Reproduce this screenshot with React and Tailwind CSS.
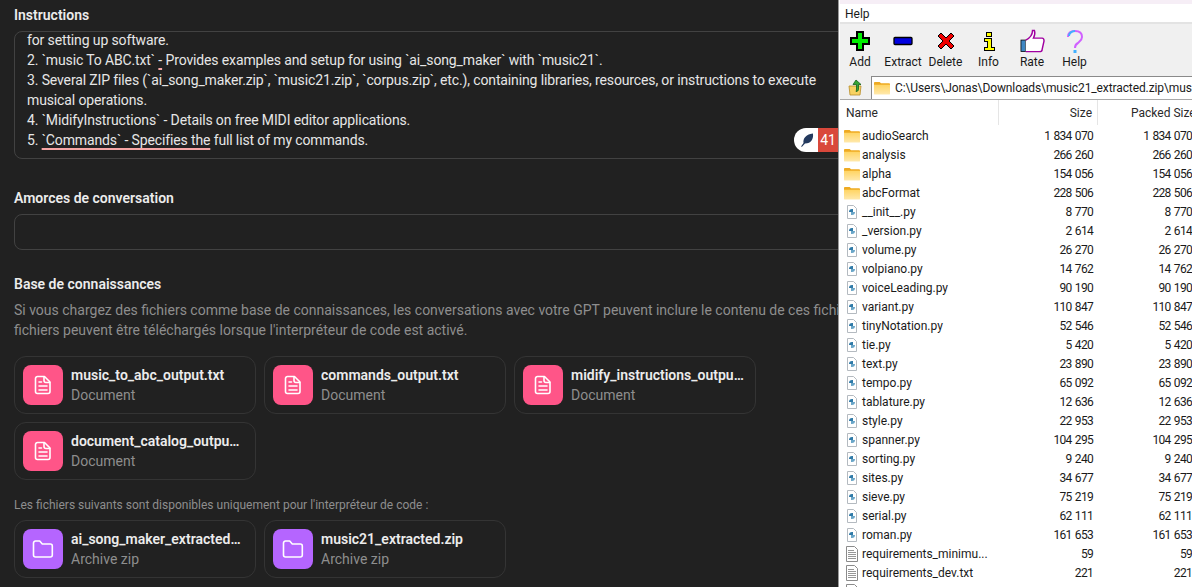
import { Fragment } from 'react';

const SQUIGGLE = 'underline decoration-[#f5a5a5] decoration-2 underline-offset-[3px] [text-decoration-skip-ink:none]';

const INSTRUCTIONS = [
  <Fragment key="1">for setting up software.</Fragment>,
  <Fragment key="2">2. `music To ABC.txt` <span className={SQUIGGLE}>-</span> Provides examples and setup for using `ai_song_maker` with `music21`.</Fragment>,
  <Fragment key="3">3. Several ZIP files (`ai_song_maker.zip`, `music21.zip`, `corpus.zip`, etc.), containing libraries, resources, or instructions to execute</Fragment>,
  <Fragment key="4">musical operations.</Fragment>,
  <Fragment key="5">4. `MidifyInstructions` - Details on free MIDI editor applications.</Fragment>,
  <Fragment key="6">5. <span className={SQUIGGLE}>`Commands` - Specifies the</span> full list of my commands.</Fragment>,
];

const DOCS = [
  'music_to_abc_output.txt',
  'commands_output.txt',
  'midify_instructions_output.txt',
  'document_catalog_output.txt',
];

const ZIPS = ['ai_song_maker_extracted.zip', 'music21_extracted.zip'];

const ROWS = [
  ['audioSearch', '1 834 070', 'dir'],
  ['analysis', '266 260', 'dir'],
  ['alpha', '154 056', 'dir'],
  ['abcFormat', '228 506', 'dir'],
  ['__init__.py', '8 770', 'py'],
  ['_version.py', '2 614', 'py'],
  ['volume.py', '26 270', 'py'],
  ['volpiano.py', '14 762', 'py'],
  ['voiceLeading.py', '90 190', 'py'],
  ['variant.py', '110 847', 'py'],
  ['tinyNotation.py', '52 546', 'py'],
  ['tie.py', '5 420', 'py'],
  ['text.py', '23 890', 'py'],
  ['tempo.py', '65 092', 'py'],
  ['tablature.py', '12 636', 'py'],
  ['style.py', '22 953', 'py'],
  ['spanner.py', '104 295', 'py'],
  ['sorting.py', '9 240', 'py'],
  ['sites.py', '34 677', 'py'],
  ['sieve.py', '75 219', 'py'],
  ['serial.py', '62 111', 'py'],
  ['roman.py', '161 653', 'py'],
  ['requirements_minimu...', '59', 'txt'],
  ['requirements_dev.txt', '221', 'txt'],
  ['', '', 'txt'],
];

function DocIcon() {
  return (
    <svg width="18" height="20" viewBox="0 0 18 20" fill="none" stroke="white" strokeWidth="1.6" strokeLinecap="round" strokeLinejoin="round">
      <path d="M3.5 1.5h7l5.5 5.5v9.5a2 2 0 0 1-2 2H3.5a2 2 0 0 1-2-2v-13a2 2 0 0 1 2-2z" />
      <path d="M10 1.8V5.5a2 2 0 0 0 2 2h3.6" />
      <path d="M5 7h2.5M5 11h8M5 15h8" />
    </svg>
  );
}

function ZipIcon() {
  return (
    <svg width="22" height="20" viewBox="0 0 22 20" fill="none" stroke="white" strokeWidth="1.6" strokeLinejoin="round">
      <path d="M1.500 4a2 2 0 0 1 2-2h4.200l2.600 3h8a2 2 0 0 1 2 2v9a2 2 0 0 1-2 2h-14.800a2 2 0 0 1-2-2z" />
    </svg>
  );
}

function FileCard({ name, sub, color, icon }) {
  return (
    <div className="flex items-center gap-2 w-[242px] h-[58px] rounded-xl border border-[#343434] pl-2 pr-[11px]">
      <div className={`w-10 h-10 shrink-0 rounded-lg flex items-center justify-center ${color}`}>{icon}</div>
      <div className="min-w-0 flex-1">
        <div className="truncate text-[14px] leading-5 font-semibold text-[#ececec]">{name}</div>
        <div className="text-[14px] leading-5 text-[#8e8e8e]">{sub}</div>
      </div>
    </div>
  );
}

function SmallFolder() {
  return (
    <svg width="16" height="14" viewBox="0 0 17 14" className="shrink-0">
      <defs>
        <linearGradient id="folderBody" x1="0" y1="0" x2="0" y2="1">
          <stop offset="0" stopColor="#ffd462" />
          <stop offset="1" stopColor="#ffe9ad" />
        </linearGradient>
      </defs>
      <path d="M0 1.500a1 1 0 0 1 1-1h5l1.500 1.500h8.500a1 1 0 0 1 1 1V4H0z" fill="#eeaa22" />
      <path d="M0 3.500h17v9.500a1 1 0 0 1-1 1H1a1 1 0 0 1-1-1z" fill="url(#folderBody)" />
    </svg>
  );
}

function PyFile() {
  return (
    <svg width="16" height="16" viewBox="0 0 16 16" className="shrink-0">
      <path d="M3.500 1.500h6l3 3v10h-9z" fill="#fff" stroke="#b4bac0" />
      <path d="M5 8a3 3 0 0 1 3-3h1v3H5z" fill="#2f7aa8" />
      <path d="M11 8a3 3 0 0 1-3 3H7V8h4z" fill="#6aa6c8" />
    </svg>
  );
}

function TxtFile() {
  return (
    <svg width="16" height="16" viewBox="0 0 16 16" className="shrink-0" fill="none" stroke="#8b8b8b">
      <path d="M2.500 0.500h8l3 3v12h-11z" fill="#fff" />
      <path d="M4 4.500h6M4 6.500h8M4 8.500h8M4 10.500h8M4 12.500h8" strokeWidth="0.900" />
    </svg>
  );
}

function ToolBtn({ label, className, children }) {
  return (
    <div className={`flex flex-col items-center shrink-0 ${className}`}>
      <div className="h-[26px] flex items-center justify-center">{children}</div>
      <div className="text-[12px] leading-4 text-[#1a1a1a]">{label}</div>
    </div>
  );
}

function Toolbar() {
  return (
    <div className="flex h-[52px] bg-[#f0f0f0] pt-[4px] pl-[1px]">
      <ToolBtn label="Add" className="w-[38px]">
        <svg width="20" height="20" viewBox="0 0 20 20" shapeRendering="crispEdges">
          <path d="M7 1h6v6h6v6h-6v6H7v-6H1V7h6z" fill="#00f000" stroke="#000" strokeWidth="1.500" />
        </svg>
      </ToolBtn>
      <ToolBtn label="Extract" className="w-[48px]">
        <svg width="20" height="10" viewBox="0 0 20 10">
          <rect x="1" y="1.500" width="18" height="7" rx="1" fill="#0000e0" stroke="#000" strokeWidth="1.300" />
        </svg>
      </ToolBtn>
      <ToolBtn label="Delete" className="w-[37px]">
        <svg width="18" height="18" viewBox="0 0 18 18">
          <path d="M1 4l3-3 5 5 5-5 3 3-5 5 5 5-3 3-5-5-5 5-3-3 5-5z" fill="#f00000" stroke="#000" />
        </svg>
      </ToolBtn>
      <ToolBtn label="Info" className="w-[49px]">
        <svg width="12" height="20" viewBox="0 0 12 20" shapeRendering="crispEdges">
          <path d="M3 1h5v4H3zM1 7h7v9h3v3H1v-3h3v-6H1z" fill="#ffff00" stroke="#000" />
        </svg>
      </ToolBtn>
      <ToolBtn label="Rate" className="w-[38px]">
        <svg width="25" height="25" viewBox="0 0 26 25">
          <rect x="1" y="11" width="5" height="12" fill="#3f87c4" stroke="#000" strokeWidth="0.800" />
          <path d="M6 11c4-2 7-6 7-10h2c1 3 0 6-1 8h9c2 0 2 2 2 3l-2 9c0 1-1 2-3 2H6" fill="#fff" stroke="#a000a0" strokeWidth="1.500" />
        </svg>
      </ToolBtn>
      <ToolBtn label="Help" className="w-[47px]">
        <svg width="18" height="25" viewBox="0 0 18 25" fill="none">
          <path d="M2 8c0-4 3-6 7-6s7 2 7 6c0 3-2 4-4 6-2 1-3 2-3 5" stroke="#d060ff" strokeWidth="2" />
          <path d="M3 7c0-3 3-5 6-5" stroke="#40b0ff" strokeWidth="2" />
          <rect x="7.500" y="21" width="3" height="3" fill="#40b0ff" />
        </svg>
      </ToolBtn>
    </div>
  );
}

function ZipWindow() {
  return (
    <div className="w-[354px] h-full shrink-0 bg-white overflow-hidden border-l border-[#9a9a9a] pl-[1px] font-['Roboto',sans-serif]">
      <div className="h-1 bg-[#f6eef6]" />
      <div className="h-[18px] pl-[5px] pt-[1px] text-[12px] leading-[19px] text-[#1a1a1a]">Help</div>
      <div className="h-[2px] bg-[#e3e3e3]" />
      <Toolbar />
      <div className="flex items-center h-[24px] bg-[#f0f0f0] border-b border-[#a8a8a8]">
        <div className="w-[31px] flex justify-center">
          <svg width="16" height="17" viewBox="0 0 16 17">
            <path d="M1 7h12l-1 9H2z" fill="#f7d262" stroke="#b78d2a" strokeWidth="0.800" />
            <path d="M8 1l5 4.500h-2.500v5c0 1-1 2-2.500 2 0.500-1 0.500-2 0.500-2.500V5.500H5z" fill="#35a535" stroke="#17601b" strokeWidth="0.800" />
          </svg>
        </div>
        <div className="flex items-center gap-[5px] flex-1 h-[23px] bg-white border-t border-l border-[#8a8a8a] pl-[2px] min-w-0">
          <SmallFolder />
          <span className="text-[12px] whitespace-nowrap tracking-[-0.1px] text-[#1a1a1a]">C:\Users\Jonas\Downloads\music21_extracted.zip\music21\</span>
        </div>
      </div>
      <div className="flex h-[25px] items-center text-[12px] text-[#2a2a2a]">
        <div className="w-[160px] pl-[6px] h-full flex items-center border-r border-[#e5e5e5]">Name</div>
        <div className="w-[100px] pr-[5px] h-full flex items-center justify-end border-r border-[#e5e5e5]">Size</div>
        <div className="w-[94px] shrink-0 whitespace-nowrap pl-[33px] h-full flex items-center">Packed Size</div>
      </div>
      <div className="pt-[1px]">
        {ROWS.map(([name, size, type], i) => (
          <div key={i} className="flex items-center h-[19px] text-[12px] text-[#1a1a1a]">
            <div className="w-[160px] flex items-center gap-[2px] pl-[4px]">
              {type === 'dir' ? <SmallFolder /> : type === 'py' ? <PyFile /> : <TxtFile />}
              <span className="whitespace-nowrap">{name}</span>
            </div>
            <div className="w-[96px] text-right tracking-[-0.7px] [word-spacing:1px]">{size}</div>
            <div className="w-[99px] shrink-0 text-right whitespace-nowrap tracking-[-0.7px] [word-spacing:1px]">{size}</div>
          </div>
        ))}
      </div>
    </div>
  );
}

export default function App() {
  return (
    <div className="flex w-[1192px] h-[587px] overflow-hidden bg-[#212121] font-['Roboto',sans-serif]">
      <div className="relative w-[838px] shrink-0 overflow-hidden pl-[14px] pt-[7px]">
        <div className="text-[14px] leading-[17px] font-semibold text-[#ececec]">Instructions</div>
        <div className="w-[900px] h-[128px] mt-[7px] overflow-hidden rounded-lg border border-[#424242] pl-[12px] text-[14px] leading-5 tracking-[-0.13px] text-[#e6e6e6]">
          <div className="-mt-[2px]">
            {INSTRUCTIONS.map((line, i) => (
              <div key={i} className="whitespace-nowrap">{line}</div>
            ))}
          </div>
        </div>

        <div className="mt-[31px] text-[14px] leading-[17px] font-semibold text-[#ececec]">Amorces de conversation</div>
        <div className="w-[900px] h-[36px] mt-[7px] rounded-lg border border-[#424242]" />

        <div className="mt-[26px] text-[14px] leading-[17px] font-semibold text-[#ececec]">Base de connaissances</div>
        <div className="mt-[7px] text-[14px] leading-5 text-[#8e8e8e]">
          <div className="whitespace-nowrap">Si vous chargez des fichiers comme base de connaissances, les conversations avec votre GPT peuvent inclure le contenu de ces fichiers. Les</div>
          <div className="whitespace-nowrap">fichiers peuvent être téléchargés lorsque l'interpréteur de code est activé.</div>
        </div>

        <div className="mt-[16px] grid grid-cols-[242px_242px_242px] gap-2">
          {DOCS.map((d) => (
            <FileCard key={d} name={d} sub="Document" color="bg-[#ff5588]" icon={<DocIcon />} />
          ))}
        </div>

        <div className="mt-[17px] text-[12px] leading-4 text-[#8e8e8e]">Les fichiers suivants sont disponibles uniquement pour l'interpréteur de code :</div>

        <div className="mt-[7px] grid grid-cols-[242px_242px_242px] gap-2">
          {ZIPS.map((d) => (
            <FileCard key={d} name={d} sub="Archive zip" color="bg-[#b565ff]" icon={<ZipIcon />} />
          ))}
        </div>

        {/* spell-check badge sitting over the textarea corner */}
        <div className="absolute left-[794px] top-[128px] flex w-[44px] h-6 overflow-hidden rounded-l-full rounded-r-lg">
          <div className="w-6 bg-white flex items-center justify-center pl-[1px]">
            <svg width="14" height="14" viewBox="0 0 14 14">
              <path d="M1 13.500l2.500-3.500C3 6 5 1.500 13 0.500 13.500 6 11.500 10.500 5 10.500L2 13.800z" fill="#243a5e" />
            </svg>
          </div>
          <div className="flex-1 bg-[#d9483b] text-white text-[14px] leading-6 text-center">41</div>
        </div>
      </div>
      <ZipWindow />
    </div>
  );
}
